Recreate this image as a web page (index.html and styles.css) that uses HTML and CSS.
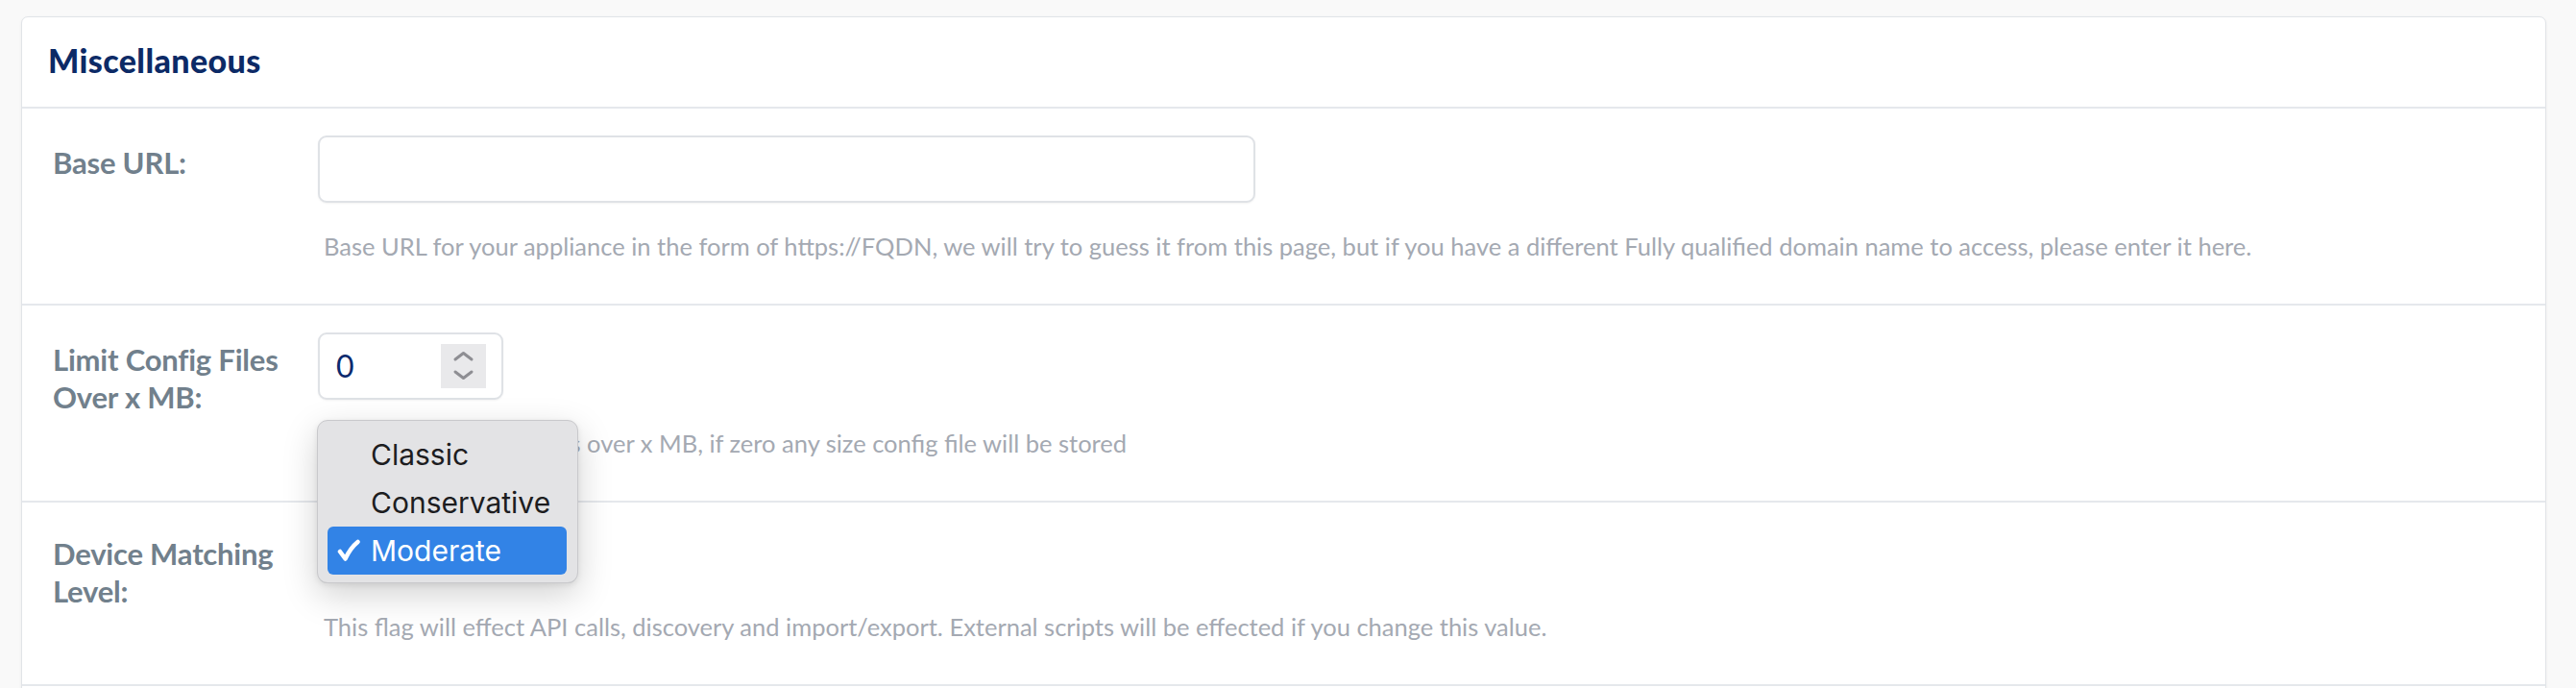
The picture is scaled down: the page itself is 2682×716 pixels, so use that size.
FILE: index.html
```html
<!DOCTYPE html>
<html lang="en">
<head>
<meta charset="utf-8">
<title>Miscellaneous</title>
<link rel="stylesheet" href="styles.css">
</head>
<body>
<div class="card">
  <div class="card-header">
    <h2 class="card-title">Miscellaneous</h2>
  </div>

  <div class="row">
    <div class="label">Base URL:</div>
    <div class="control">
      <div class="text-input"></div>
      <div class="help">Base URL for your appliance in the form of https://FQDN, we will try to guess it from this page, but if you have a different Fully qualified domain name to access, please enter it here.</div>
    </div>
  </div>

  <div class="row">
    <div class="label">Limit Config Files Over x MB:</div>
    <div class="control">
      <div class="number-input">
        <span class="number-value">0</span>
        <span class="spinner">
          <svg width="47" height="46" viewBox="0 0 47 46"><polyline points="15,16 23.5,9.5 32,16" /><polyline points="15,29 23.5,35.5 32,29" /></svg>
        </span>
      </div>
      <div class="help">Do not store config files over x MB, if zero any size config file will be stored</div>
    </div>
  </div>

  <div class="row row-select">
    <div class="label">Device Matching Level:</div>
    <div class="control">
      <div class="select-box">Moderate</div>
      <div class="popup">
        <div class="popup-item">Classic</div>
        <div class="popup-item">Conservative</div>
        <div class="popup-item is-selected">
          <svg class="check" width="24" height="24" viewBox="0 0 24 24"><path d="M3 13 L8.5 20.5 Q14 9 21.5 3" /></svg>
          Moderate
        </div>
      </div>
      <div class="help">This flag will effect API calls, discovery and import/export. External scripts will be effected if you change this value.</div>
    </div>
  </div>

  <div class="row-rest"></div>
</div>
</body>
</html>
```

FILE: styles.css
```css
html, body {
  margin: 0;
  padding: 0;
}

body {
  background: #f9f9f9;
  padding: 17px 31px 0 22px;
  font-family: Lato, "Open Sans", sans-serif;
  overflow: hidden;
}

.card {
  background: #ffffff;
  border: 1px solid #e1e4e8;
  border-radius: 7px;
  box-shadow: 0 1px 3px rgba(0, 0, 0, 0.06);
}

.card-header {
  height: 68px;
  padding: 25px 27px 0 27px;
  border-bottom: 2px solid #e5e8ec;
}

.card-title {
  margin: 0;
  font-family: Lato, sans-serif;
  font-weight: 900;
  font-size: 34px;
  line-height: 40px;
  color: #0c2a66;
  letter-spacing: 0.4px;
}

.row {
  display: grid;
  grid-template-columns: 276px 1fr;
  padding: 28px 0 43px 32px;
  border-bottom: 2px solid #e5e8ec;
}

.row-select {
  padding-top: 14px;
}

.label {
  margin-top: 9px;
  padding-right: 16px;
  font-family: Lato, sans-serif;
  font-weight: 700;
  font-size: 31px;
  line-height: 39px;
  color: #71808c;
  letter-spacing: -0.2px;
}

.row-select .label {
  margin-top: 20px;
}

.control {
  position: relative;
  min-width: 0;
}

.text-input {
  width: 972px;
  height: 66px;
  border: 2px solid #dfe2e6;
  border-radius: 9px;
  background: #fff;
  box-shadow: 0 1px 2px rgba(0, 0, 0, 0.05);
}

.number-input {
  box-sizing: border-box;
  width: 193px;
  height: 70px;
  border: 2px solid #dfe2e6;
  border-radius: 9px;
  background: #fff;
  box-shadow: 0 1px 2px rgba(0, 0, 0, 0.05);
  display: flex;
  align-items: center;
  justify-content: space-between;
  padding: 0 16px 0 17px;
}

.number-value {
  font-family: Lato, sans-serif;
  font-size: 32px;
  color: #0b2a6e;
  line-height: 1;
}

.spinner {
  display: block;
  width: 47px;
  height: 46px;
  background: #e9e9eb;
}

.spinner svg {
  display: block;
}

.spinner polyline {
  fill: none;
  stroke: #8e8e93;
  stroke-width: 3;
  stroke-linecap: round;
  stroke-linejoin: round;
}

.select-box {
  box-sizing: border-box;
  width: 270px;
  height: 70px;
  border: 2px solid #dfe2e6;
  border-radius: 9px;
  background: #fff;
  padding: 0 20px;
  font-size: 30px;
  line-height: 66px;
  color: #0b2a6e;
}

.help {
  margin-top: 28px;
  margin-left: 6px;
  font-family: Lato, sans-serif;
  font-size: 25.5px;
  line-height: 34px;
  color: #a4a9b2;
  white-space: nowrap;
}

.popup {
  position: absolute;
  top: -100px;
  left: -1px;
  box-sizing: border-box;
  width: 272px;
  height: 170px;
  padding: 10px 11px 10px 10px;
  background: #e3e3e5;
  border: 1px solid #c9c9cc;
  border-radius: 11px;
  box-shadow: 0 12px 36px rgba(0, 0, 0, 0.18), 0 2px 6px rgba(0, 0, 0, 0.08);
  z-index: 5;
}

.popup-item {
  position: relative;
  height: 50px;
  padding-left: 45px;
  border-radius: 6px;
  font-family: Inter, "Noto Sans", sans-serif;
  font-size: 30px;
  line-height: 50px;
  color: #1d1d1f;
}

.popup-item.is-selected {
  background: #3283e6;
  color: #ffffff;
}

.check {
  position: absolute;
  left: 10px;
  top: 13px;
}

.check path {
  fill: none;
  stroke: #ffffff;
  stroke-width: 4.5;
  stroke-linecap: round;
  stroke-linejoin: round;
}

.row-rest {
  height: 60px;
}
```
